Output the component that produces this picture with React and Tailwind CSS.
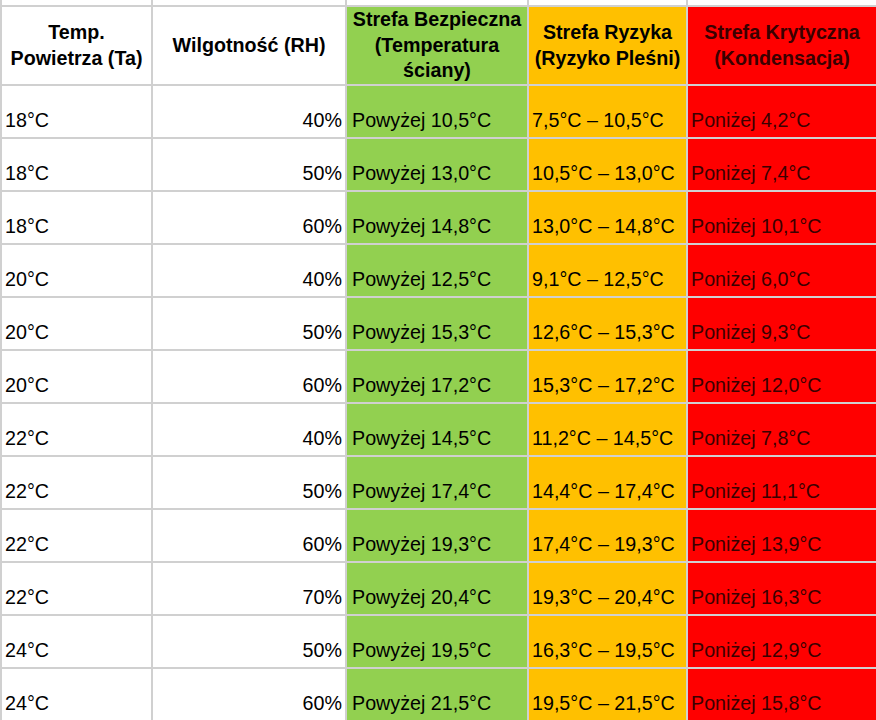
const rows = [
  ['18°C', '40%', '10,5', '7,5', '4,2'],
  ['18°C', '50%', '13,0', '10,5', '7,4'],
  ['18°C', '60%', '14,8', '13,0', '10,1'],
  ['20°C', '40%', '12,5', '9,1', '6,0'],
  ['20°C', '50%', '15,3', '12,6', '9,3'],
  ['20°C', '60%', '17,2', '15,3', '12,0'],
  ['22°C', '40%', '14,5', '11,2', '7,8'],
  ['22°C', '50%', '17,4', '14,4', '11,1'],
  ['22°C', '60%', '19,3', '17,4', '13,9'],
  ['22°C', '70%', '20,4', '19,3', '16,3'],
  ['24°C', '50%', '19,5', '16,3', '12,9'],
  ['24°C', '60%', '21,5', '19,5', '15,8'],
];

const head = 'flex items-center justify-center text-center font-bold leading-[25.5px] px-[3px]';
const cell = 'flex items-end pb-[1px] px-[3px] whitespace-nowrap';

const App = () => {
  return (
    <div className="w-[876px] h-[720px] overflow-hidden bg-white font-['Liberation_Sans',Arial,sans-serif] text-[19.7px] text-black">
      <div className="grid grid-cols-[149px_192px_180px_157px_188px] grid-rows-[5px_77px_repeat(12,51px)] gap-[2px] bg-[#d0d0d0] pl-[2px]">
        {/* slice of the row above */}
        <div className="bg-white" />
        <div className="bg-white" />
        <div className="bg-white" />
        <div className="bg-white" />
        <div className="bg-white" />

        <div className={`${head} bg-white`}>Temp. Powietrza (Ta)</div>
        <div className={`${head} bg-white`}>Wilgotność (RH)</div>
        <div className={`${head} bg-[#92d050]`}>Strefa Bezpieczna (Temperatura ściany)</div>
        <div className={`${head} bg-[#ffc000]`}>Strefa Ryzyka (Ryzyko Pleśni)</div>
        <div className={`${head} bg-[#ff0000] text-[#3a0000]`}>Strefa Krytyczna (Kondensacja)</div>

        {rows.map((r, i) => (
          <div key={i} className="contents">
            <div className={`${cell} bg-white`}>{r[0]}</div>
            <div className={`${cell} bg-white justify-end`}>{r[1]}</div>
            <div className={`${cell} bg-[#92d050] pl-[5px]`}>Powyżej {r[2]}°C</div>
            <div className={`${cell} bg-[#ffc000]`}>{r[3]}°C – {r[2]}°C</div>
            <div className={`${cell} bg-[#ff0000] text-[#3a0000]`}>Poniżej {r[4]}°C</div>
          </div>
        ))}
      </div>
    </div>
  );
};

export default App;
